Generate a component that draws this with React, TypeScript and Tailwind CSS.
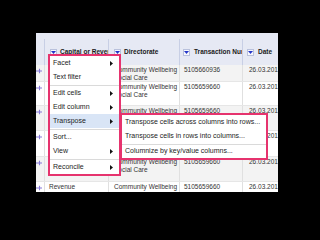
import React from 'react';

type Row = {
  h: string;
  cap: string;
  dir: string[];
  num: string;
  bg: string;
};

// col 1 of the first rows sits under the open menu, so it is left blank
const rows: Row[] = [
  { h: 'h-[17px]', cap: '', dir: ['Community Wellbeing', 'Social Care'], num: '5105660936', bg: 'bg-[#f3f3f3]' },
  { h: 'h-[24px]', cap: '', dir: ['Community Wellbeing', 'Social Care'], num: '5105659660', bg: 'bg-white' },
  { h: 'h-[25px]', cap: '', dir: ['Community Wellbeing', 'Social Care'], num: '5105659660', bg: 'bg-[#f3f3f3]' },
  { h: 'h-[26px]', cap: '', dir: [], num: '', bg: 'bg-white' },
  { h: 'h-[25px]', cap: '', dir: ['Community Wellbeing', 'Social Care'], num: '5105659660', bg: 'bg-[#f3f3f3]' },
  { h: 'h-[20px]', cap: 'Revenue', dir: ['Community Wellbeing'], num: '5105659660', bg: 'bg-white' },
];

type Item = { label: string; arrow?: boolean; active?: boolean } | 'sep';

const menu: Item[] = [
  { label: 'Facet', arrow: true },
  { label: 'Text filter' },
  'sep',
  { label: 'Edit cells', arrow: true },
  { label: 'Edit column', arrow: true },
  { label: 'Transpose', arrow: true, active: true },
  'sep',
  { label: 'Sort...' },
  { label: 'View', arrow: true },
  'sep',
  { label: 'Reconcile', arrow: true },
];

function DropBtn() {
  return (
    <div className="w-[7px] h-[7px] shrink-0 bg-[#f7f8fd] border border-[#b9c1dc] flex items-center justify-center">
      <svg width="5" height="3" viewBox="0 0 5 3">
        <path d="M0 0H5L2.5 3Z" fill="#2437c9" />
      </svg>
    </div>
  );
}

function Arrow() {
  return (
    <svg width="3" height="5" viewBox="0 0 3 5" className="shrink-0">
      <path d="M0 0L3 2.5L0 5Z" fill="#111" />
    </svg>
  );
}

function Star() {
  return (
    <svg width="8" height="6" viewBox="0 0 8 6" className="-ml-[1px]">
      <path d="M0 3H7M4.5 0.8V5.2" stroke="#8579d8" strokeWidth="1.1" />
    </svg>
  );
}

function Header() {
  const cell = 'h-full flex items-center gap-[3px] border-r border-[#c8cfe5] overflow-hidden whitespace-nowrap';
  return (
    <div className="h-[32px] flex bg-[#e6e9f4] text-[6.5px] font-bold text-[#1a1a1a] pt-[6px]">
      <div className={`${cell} w-[9px]`} />
      <div className={`${cell} w-[64px] pl-[5px]`}>
        <DropBtn />
        <span>Capital or Rever</span>
      </div>
      <div className={`${cell} w-[71px] pl-[5px]`}>
        <DropBtn />
        <span>Directorate</span>
      </div>
      <div className={`${cell} w-[63px] pl-[3px] gap-[4px]`}>
        <DropBtn />
        <span>Transaction Nur</span>
      </div>
      <div className="h-full flex items-center gap-[4px] pl-[4px] flex-1 overflow-hidden whitespace-nowrap">
        <DropBtn />
        <span>Date</span>
      </div>
    </div>
  );
}

function DataRow({ row }: { row: Row }) {
  const cell = 'h-full border-r border-[#e0e0e0] overflow-hidden whitespace-nowrap pt-[1px]';
  return (
    <div className={`${row.h} ${row.bg} flex border-b border-[#e6e6e6] text-[6.5px] leading-[8px] text-[#333]`}>
      <div className={`${cell} w-[9px] pt-[3px]`}>
        <Star />
      </div>
      <div className={`${cell} w-[64px] pl-[4px]`}>{row.cap}</div>
      <div className={`${cell} w-[71px] pl-[5px]`}>
        {row.dir.map((d) => (
          <div key={d}>{d}</div>
        ))}
      </div>
      <div className={`${cell} w-[63px] pl-[4px]`}>{row.num}</div>
      <div className="h-full flex-1 overflow-hidden whitespace-nowrap pl-[6px] pt-[1px]">26.03.2011</div>
    </div>
  );
}

function ColumnMenu() {
  return (
    <div className="absolute left-[12px] top-[21px] w-[73px] bg-white border-2 border-[#e6336e] text-[7px] text-[#1c1c1c]">
      {menu.map((it, i) =>
        it === 'sep' ? (
          <div key={i} className="h-[2px] flex items-center">
            <div className="w-full border-t border-[#dadada]" />
          </div>
        ) : (
          <div
            key={i}
            className={`h-[14px] flex items-center justify-between pl-[3px] pr-[6px] ${it.active ? 'bg-[#d9e5f6]' : ''}`}
          >
            <span>{it.label}</span>
            {it.arrow && <Arrow />}
          </div>
        )
      )}
    </div>
  );
}

function TransposeMenu() {
  return (
    <div className="absolute left-[84px] top-[80px] w-[148px] bg-white border-2 border-[#e6336e] text-[7px] text-[#1c1c1c] whitespace-nowrap">
      <div className="h-[14px] flex items-center pl-[3px]">Transpose cells across columns into rows...</div>
      <div className="h-[15px] flex items-center pl-[3px]">Transpose cells in rows into columns...</div>
      <div className="border-t border-[#dadada]" />
      <div className="h-[13px] flex items-center pl-[3px]">Columnize by key/value columns...</div>
    </div>
  );
}

export default function App() {
  return (
    <div className="w-[320px] h-[240px] bg-black pt-[33px] pl-[36px]" style={{ fontFamily: '"Liberation Sans", Arial, sans-serif' }}>
      <div className="relative w-[242px] h-[159px] bg-white overflow-hidden">
        <Header />
        {rows.map((r, i) => (
          <DataRow key={i} row={r} />
        ))}
        <ColumnMenu />
        <TransposeMenu />
      </div>
    </div>
  );
}
